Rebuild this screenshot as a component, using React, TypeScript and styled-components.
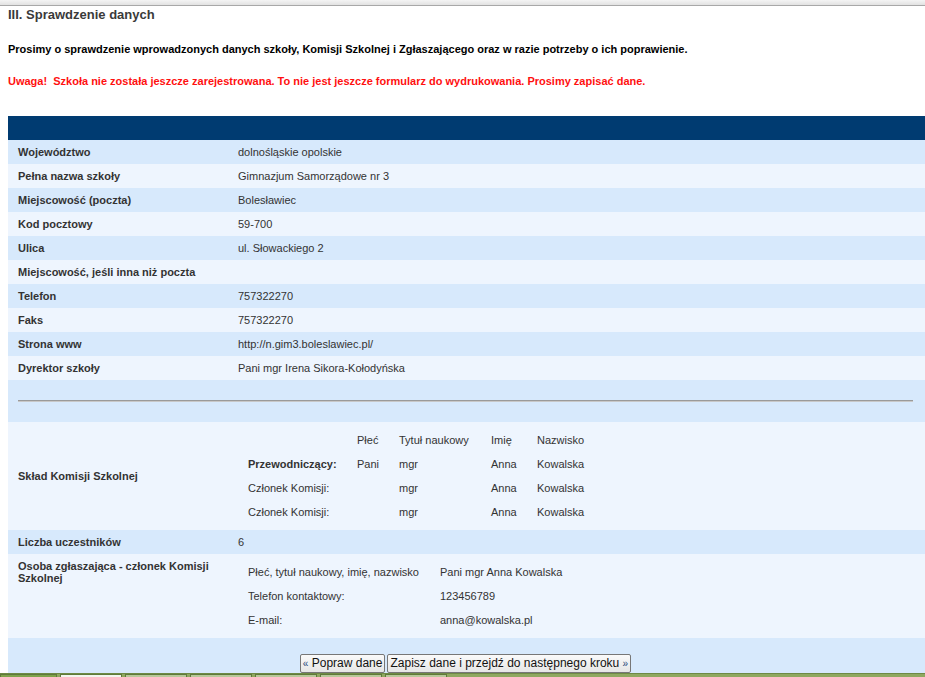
import React from 'react';
import styled, { createGlobalStyle } from 'styled-components';

const GlobalStyle = createGlobalStyle`
  html, body {
    margin: 0;
    padding: 0;
    background: #ffffff;
    font-family: 'Liberation Sans', Arial, sans-serif;
    overflow: hidden;
  }
`;

type Row = { label: string; value: string };

const schoolRows: Row[] = [
  { label: 'Województwo', value: 'dolnośląskie opolskie' },
  { label: 'Pełna nazwa szkoły', value: 'Gimnazjum Samorządowe nr 3' },
  { label: 'Miejscowość (poczta)', value: 'Bolesławiec' },
  { label: 'Kod pocztowy', value: '59-700' },
  { label: 'Ulica', value: 'ul. Słowackiego 2' },
  { label: 'Miejscowość, jeśli inna niż poczta', value: '' },
  { label: 'Telefon', value: '757322270' },
  { label: 'Faks', value: '757322270' },
  { label: 'Strona www', value: 'http://n.gim3.boleslawiec.pl/' },
  { label: 'Dyrektor szkoły', value: 'Pani mgr Irena Sikora-Kołodyńska' },
];

const committee = [
  { role: 'Przewodniczący:', lead: true, sex: 'Pani', title: 'mgr', name: 'Anna', surname: 'Kowalska' },
  { role: 'Członek Komisji:', lead: false, sex: '', title: 'mgr', name: 'Anna', surname: 'Kowalska' },
  { role: 'Członek Komisji:', lead: false, sex: '', title: 'mgr', name: 'Anna', surname: 'Kowalska' },
];

const contact: Row[] = [
  { label: 'Płeć, tytuł naukowy, imię, nazwisko', value: 'Pani mgr Anna Kowalska' },
  { label: 'Telefon kontaktowy:', value: '123456789' },
  { label: 'E-mail:', value: 'anna@kowalska.pl' },
];

const tabs = [
  { w: 55, active: false, first: true },
  { w: 60, active: true },
  { w: 60 },
  { w: 60 },
  { w: 60 },
  { w: 60 },
  { w: 60 },
];

const App = () => {
  return (
    <>
      <GlobalStyle />
      <TopBar />
      <Page>
        <Title>III. Sprawdzenie danych</Title>
        <Intro>
          Prosimy o sprawdzenie wprowadzonych danych szkoły, Komisji Szkolnej i Zgłaszającego oraz w
          razie potrzeby o ich poprawienie.
        </Intro>
        <Warning>
          Uwaga!&nbsp; Szkoła nie została jeszcze zarejestrowana. To nie jest jeszcze formularz do
          wydrukowania. Prosimy zapisać dane.
        </Warning>

        <DataTable>
          <tbody>
            <HeadRow>
              <td colSpan={2} />
            </HeadRow>
            {schoolRows.map((row, i) => (
              <StripeRow key={row.label} $dark={i % 2 === 0}>
                <LabelCell>{row.label}</LabelCell>
                <ValueCell>{row.value}</ValueCell>
              </StripeRow>
            ))}
            <StripeRow $dark>
              <SeparatorCell colSpan={2}>
                <Rule />
              </SeparatorCell>
            </StripeRow>
            <StripeRow $dark={false}>
              <LabelCell>Skład Komisji Szkolnej</LabelCell>
              <NestedCell>
                <CommitteeGrid>
                  <span />
                  <span>Płeć</span>
                  <span>Tytuł naukowy</span>
                  <span>Imię</span>
                  <span>Nazwisko</span>
                  {committee.map((m, i) => (
                    <React.Fragment key={i}>
                      <Role $bold={m.lead}>{m.role}</Role>
                      <span>{m.sex}</span>
                      <span>{m.title}</span>
                      <span>{m.name}</span>
                      <span>{m.surname}</span>
                    </React.Fragment>
                  ))}
                </CommitteeGrid>
              </NestedCell>
            </StripeRow>
            <StripeRow $dark>
              <LabelCell>Liczba uczestników</LabelCell>
              <ValueCell>6</ValueCell>
            </StripeRow>
            <StripeRow $dark={false}>
              <TopLabelCell>Osoba zgłaszająca - członek Komisji Szkolnej</TopLabelCell>
              <NestedCell>
                <ContactGrid>
                  {contact.map((c) => (
                    <React.Fragment key={c.label}>
                      <span>{c.label}</span>
                      <span>{c.value}</span>
                    </React.Fragment>
                  ))}
                </ContactGrid>
              </NestedCell>
            </StripeRow>
            <StripeRow $dark>
              <ButtonCell colSpan={2}>
                <Buttons>
                  <FormButton type="button">
                    <Quote>«</Quote> Popraw dane
                  </FormButton>
                  <FormButton type="button">
                    Zapisz dane i przejdź do następnego kroku <Quote>»</Quote>
                  </FormButton>
                </Buttons>
              </ButtonCell>
            </StripeRow>
          </tbody>
        </DataTable>
      </Page>
      <TaskBar>
        {tabs.map((t, i) => (
          <Tab key={i} $w={t.w} $active={!!t.active} $first={!!t.first} />
        ))}
      </TaskBar>
    </>
  );
};

export default App;

const TopBar = styled.div`
  height: 5px;
  background: linear-gradient(#f4f4f4, #e2e2e2);
  border-bottom: 1px solid #a8a8a8;
`;

const Page = styled.div`
  padding-left: 8px;
`;

const Title = styled.h3`
  margin: 1px 0 0;
  font-size: 13px;
  line-height: 16px;
  font-weight: bold;
  color: #3a3a3a;
`;

const Intro = styled.p`
  margin: 20px 0 0;
  font-size: 11px;
  line-height: 13px;
  font-weight: bold;
  color: #000;
`;

const Warning = styled.p`
  margin: 19px 0 0;
  font-size: 11px;
  line-height: 13px;
  font-weight: bold;
  color: #ff1010;
`;

const DataTable = styled.table`
  margin-top: 28px;
  width: 100%;
  border-collapse: collapse;
  border-spacing: 0;
  font-size: 11px;
  color: #333;
`;

const HeadRow = styled.tr`
  height: 24px;
  background: #003b71;
`;

const StripeRow = styled.tr<{ $dark: boolean }>`
  background: ${({ $dark }) => ($dark ? '#d7e9fc' : '#eef5fe')};
`;

const LabelCell = styled.td`
  width: 200px;
  height: 24px;
  padding: 0 10px;
  font-weight: bold;
  vertical-align: middle;
  line-height: 12px;
`;

const TopLabelCell = styled(LabelCell)`
  vertical-align: top;
  padding-top: 6px;
`;

const ValueCell = styled.td`
  height: 24px;
  padding: 0 10px;
  vertical-align: middle;
`;

const SeparatorCell = styled.td`
  height: 42px;
  padding: 0 12px 0 10px;
  vertical-align: middle;
`;

const Rule = styled.div`
  border-top: 1px solid #9a9a9a;
  border-bottom: 1px solid #c8c8c8;
`;

const NestedCell = styled.td`
  padding: 6px 10px 6px 20px;
  vertical-align: top;
`;

const CommitteeGrid = styled.div`
  display: grid;
  grid-template-columns: 109px 42px 92px 46px auto;
  grid-auto-rows: 24px;
  align-items: center;
`;

const Role = styled.span<{ $bold: boolean }>`
  font-weight: ${({ $bold }) => ($bold ? 'bold' : 'normal')};
`;

const ContactGrid = styled.div`
  display: grid;
  grid-template-columns: 192px auto;
  grid-auto-rows: 24px;
  align-items: center;
`;

const ButtonCell = styled.td`
  height: 48px;
  padding: 16px 0 0;
  vertical-align: top;
`;

const Buttons = styled.div`
  display: flex;
  justify-content: center;
  gap: 2px;
  padding-right: 2px;
`;

const FormButton = styled.button`
  height: 19px;
  padding: 0 2px;
  font-family: 'Liberation Sans', Arial, sans-serif;
  font-size: 12px;
  color: #111;
  background: linear-gradient(#fafafa, #e6e6e6);
  border: 1px solid #777;
  border-radius: 2px;
  line-height: 15px;
`;

const Quote = styled.span`
  font-size: 10px;
  color: #26467a;
`;

const TaskBar = styled.div`
  position: fixed;
  left: 0;
  right: 0;
  bottom: 0;
  height: 3px;
  display: flex;
  gap: 3px;
  background: #8fa860;
  border-top: 1px solid #6e8a45;
`;

const Tab = styled.div<{ $w: number; $active: boolean; $first: boolean }>`
  width: ${({ $w }) => $w}px;
  background: ${({ $active, $first }) =>
    $active ? '#f4f6ee' : $first ? '#7fa34c' : '#b8c89a'};
  border: 1px solid #5f7a3a;
  border-bottom: none;
`;
